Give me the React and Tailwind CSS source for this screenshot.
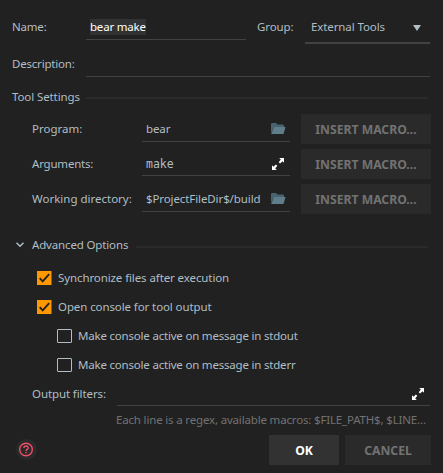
import React from 'react';

function FolderIcon() {
  return (
    <svg className="block h-[14px] w-[16px] shrink-0" viewBox="0 0 16 14">
      <path d="M1 2.2Q1 1 2.2 1H6L7.5 2.5H12.8Q14 2.5 14 3.7V5H4L1 11Z" fill="#49636f" />
      <path d="M4 5H15.5L13.7 11.5Q13.5 12 13 12H1.5Q1.2 12 1.3 11.5Z" fill="#607d8b" />
    </svg>
  );
}

function ExpandIcon() {
  return (
    <svg className="block h-[12px] w-[12px] shrink-0" viewBox="0 0 12 12" fill="#fff">
      <path d="M7.2 0H12V4.8L10.5 3.3L8.1 5.6L6.7 4.2L8.8 1.6Z" />
      <path d="M4.8 12H0V7.2L1.5 8.7L3.9 6.4L5.3 7.8L3.2 10.4Z" />
    </svg>
  );
}

function MacroRow({ label, value, mono, icon, field, spacing }) {
  return (
    <div className="flex h-[30px]">
      <span className={`w-[110px] leading-[30px] ${spacing}`}>{label}</span>
      <div className={`flex w-[148px] justify-between border-b border-[#424242] pl-1 ${field}`}>
        <span className={`leading-[30px] ${mono ? "font-['DejaVu_Sans_Mono',monospace] tracking-normal" : ''}`}>{value}</span>
        {icon === 'folder' ? (
          <div className="pt-2 pr-[4px]"><FolderIcon /></div>
        ) : (
          <div className="pt-[9px] pr-[6px]"><ExpandIcon /></div>
        )}
      </div>
      <button className="ml-[11px] h-[30px] w-[130px] bg-[#2a2a2a] pt-[2px] text-[12.2px] font-bold tracking-normal text-[#727272]">INSERT MACRO…</button>
    </div>
  );
}

function Check({ checked, children, indent }) {
  return (
    <label className={`flex h-[29px] items-center gap-[6px] ${indent ? 'pl-[57px] tracking-[-0.2px]' : 'pl-[37px]'}`}>
      {checked ? (
        <svg className="h-[14px] w-[15px] shrink-0" viewBox="0 0 15 14">
          <rect x="0" y="0" width="14.5" height="14" fill="#ff9800" />
          <path d="M2.7 7.2L5.7 10.4L12.2 3.2" fill="none" stroke="#212121" strokeWidth="1.9" />
        </svg>
      ) : (
        <span className="h-[14px] w-[15px] shrink-0 rounded-[1px] border border-[#b0bec5]" />
      )}
      <span className="leading-[29px]">{children}</span>
    </label>
  );
}

export default function App() {
  return (
    <div className="h-[473px] w-[443px] overflow-hidden bg-[#212121] font-['Noto_Sans',sans-serif] text-[11.5px] tracking-[-0.1px] whitespace-nowrap text-[#b0bec5]">
      <div className="flex h-[44px] pt-3 pl-3">
        <span className="w-[74px] leading-[30px] tracking-[-0.2px]">Name:</span>
        <div className="h-[28px] w-[160px] border-b border-[#424242] pt-[7px] pl-1">
          <span className="block h-[16px] w-[56px] bg-[#323232] leading-[16px] tracking-[-0.2px] text-white">bear make</span>
        </div>
        <span className="ml-[11px] w-[48px] leading-[30px]">Group:</span>
        <div className="flex h-[32px] w-[125px] justify-between border-b-2 border-[#424242] pr-[9px] pl-[6px]">
          <span className="leading-[30px]">External Tools</span>
          <svg className="mt-[13px] h-[6px] w-[8px]" viewBox="0 0 8 6"><path d="M0 0H8L4 6Z" fill="#b0bec5" /></svg>
        </div>
      </div>
      <div className="flex h-[33px] pt-[5px] pl-3">
        <span className="w-[74px] leading-[30px] tracking-[-0.2px]">Description:</span>
        <div className="w-[344px] border-b border-[#424242]" />
      </div>
      <div className="flex h-[37px] items-start pt-[5px] pl-3">
        <span className="w-[74px] leading-[30px]">Tool Settings</span>
        <div className="mt-[15px] h-[2px] w-[342px] bg-[#2a2a2a]" />
      </div>
      <div className="flex flex-col gap-[5px] pl-8">
        <MacroRow label="Program:" value="bear" icon="folder" field="h-[28px]" spacing="tracking-normal" />
        <MacroRow label="Arguments:" value="make" mono icon="expand" field="h-[27px]" spacing="tracking-[-0.2px]" />
        <MacroRow label="Working directory:" value="$ProjectFileDir$/build" icon="folder" field="h-[28px]" spacing="tracking-normal" />
      </div>
      <div className="flex h-[49px] items-start pt-4 pl-4">
        <svg className="mt-[12px] h-[6px] w-[8px]" viewBox="0 0 8 6"><path d="M.5 .8L4 4.3L7.5 .8" fill="none" stroke="#b0bec5" strokeWidth="1.5" /></svg>
        <span className="ml-2 w-[104px] leading-[30px] tracking-[-0.15px]">Advanced Options</span>
        <div className="mt-[16px] h-[2px] w-[292px] bg-[#2a2a2a]" />
      </div>
      <Check checked>Synchronize files after execution</Check>
      <Check checked>Open console for tool output</Check>
      <Check indent>Make console active on message in stdout</Check>
      <Check indent>Make console active on message in stderr</Check>
      <div className="flex h-[27px] pl-8">
        <span className="w-[85px] leading-[30px]">Output filters:</span>
        <div className="flex w-[313px] justify-end border-b border-[#424242] pt-[9px] pr-[6px]"><ExpandIcon /></div>
      </div>
      <div className="h-[29px] pl-[116px] leading-[27px] tracking-[-0.17px] text-[#727272]">Each line is a regex, available macros: $FILE_PATH$, $LINE…</div>
      <div className="flex h-[30px] items-center pr-3 pl-4">
        <svg className="h-[22px] w-[22px]" viewBox="0 0 22 22">
          <circle cx="10.5" cy="10.5" r="10.5" fill="#2a2a2a" />
          <circle cx="10" cy="10.5" r="6.3" fill="none" stroke="#ee4f6b" strokeWidth="1.4" />
          <path d="M7.9 9.1C7.9 6.2 12.2 6.3 12.2 8.9C12.2 10.4 10.1 10.4 10.1 12" fill="none" stroke="#ee4f6b" strokeWidth="1.4" />
          <rect x="9.4" y="12.9" width="1.4" height="1.4" fill="#ee4f6b" />
        </svg>
        <button className="ml-auto h-[30px] w-[70px] bg-[#323232] pt-[2px] text-[12.2px] font-bold tracking-normal text-white">OK</button>
        <button className="ml-[6px] h-[30px] w-[86px] bg-[#2a2a2a] pt-[2px] text-[12.2px] font-bold tracking-normal text-[#727272]">CANCEL</button>
      </div>
    </div>
  );
}
